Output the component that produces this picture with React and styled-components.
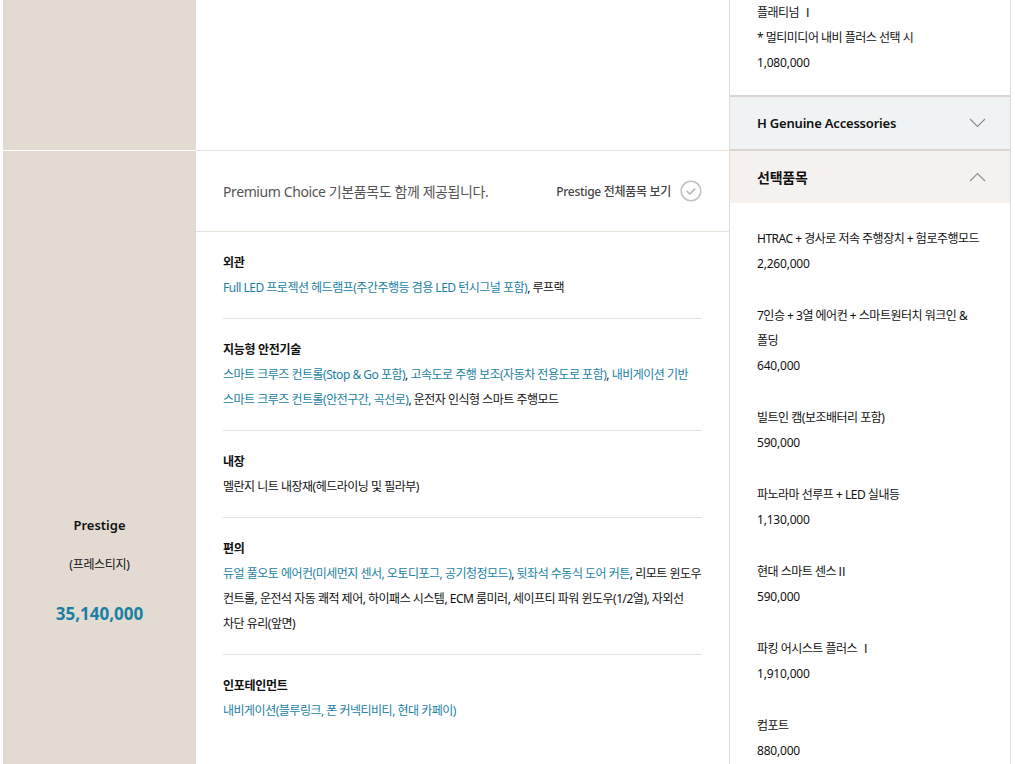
import styled, { createGlobalStyle } from 'styled-components';

const GlobalStyle = createGlobalStyle`
  html, body {
    margin: 0;
    padding: 0;
    background: #fff;
  }
  body {
    font-family: "Noto Sans", "Noto Sans CJK KR", sans-serif;
    color: #111;
    word-break: keep-all;
    overflow: hidden;
  }
`;

const Page = styled.div`
  display: flex;
  align-items: flex-start;
  padding-left: 3px;
  width: 1015px;
`;

const Main = styled.div`
  width: 726px;
  display: flex;
  flex-direction: column;
`;

const Row = styled.div`
  display: flex;
  min-height: ${p => p.$minHeight}px;
`;

const TrimCell = styled.div`
  width: 193px;
  flex-shrink: 0;
  background: #e3dbd2;
  border-top: ${p => (p.$divided ? '1px solid #fff' : 'none')};
  display: flex;
  flex-direction: column;
  align-items: center;
  justify-content: center;
  text-align: center;
`;

const TrimName = styled.div`
  font-size: 13px;
  font-weight: 600;
  line-height: 20px;
  margin-bottom: 20px;
`;

const TrimKor = styled.div`
  font-size: 12px;
  line-height: 20px;
  letter-spacing: -0.3px;
  margin-bottom: 27px;
`;

const TrimPrice = styled.div`
  font-size: 17px;
  font-weight: 700;
  line-height: 24px;
  color: #1a7fa3;
`;

const DetailCell = styled.div`
  flex: 1;
  background: #fff;
  border-top: ${p => (p.$divided ? '1px solid #e8e1da' : 'none')};
`;

const DetailHeader = styled.div`
  height: 80px;
  display: flex;
  align-items: center;
  justify-content: space-between;
  padding: 0 27px;
  border-bottom: 1px solid #e8e1da;
`;

const HeaderNote = styled.div`
  font-size: 14px;
  color: #555;
  letter-spacing: -0.4px;
`;

const ViewAll = styled.button`
  display: flex;
  align-items: center;
  gap: 9px;
  background: none;
  border: 0;
  padding: 0;
  font-family: inherit;
  font-size: 12px;
  font-weight: 500;
  color: #444;
  letter-spacing: -0.3px;
  cursor: pointer;
`;

const FeatureList = styled.div`
  padding: 0 27px;
`;

const FeatureGroup = styled.div`
  padding: 18px 0 18px;
  border-bottom: ${p => (p.$last ? 'none' : '1px solid #e5e0da')};
`;

const FeatureTitle = styled.div`
  font-size: 12px;
  font-weight: 700;
  line-height: 25px;
  letter-spacing: -0.3px;
`;

const FeatureText = styled.div`
  font-size: 12px;
  line-height: 25px;
  color: #111;
  letter-spacing: -0.5px;
`;

const Link = styled.span`
  color: #1a7fa3;
`;

const Sidebar = styled.aside`
  width: 280px;
  flex-shrink: 0;
  border-left: 1px solid #e3dcd4;
  border-right: 1px solid #e3dcd4;
`;

const OptionBlock = styled.div`
  padding: ${p => p.$padding};
  border-bottom: ${p => (p.$bordered ? '2px solid #d9d4cf' : 'none')};
`;

const AccordionHead = styled.div`
  height: 52px;
  display: flex;
  align-items: center;
  justify-content: space-between;
  padding: 0 24px 0 27px;
  background: ${p => p.$bg};
  border-bottom: ${p => (p.$bordered ? '2px solid #d9d4cf' : 'none')};
  font-size: ${p => p.$size}px;
  font-weight: 600;
  letter-spacing: -0.2px;
`;

const OptionItem = styled.div`
  margin-bottom: 27px;
  padding-right: 24px;
`;

const OptionName = styled.div`
  font-size: 12px;
  line-height: 25px;
  letter-spacing: -0.5px;
`;

const OptionPrice = styled.div`
  font-size: 12px;
  line-height: 25px;
  letter-spacing: -0.2px;
`;

function CheckCircle() {
  return (
    <svg width="22" height="22" viewBox="0 0 22 22">
      <circle cx="11" cy="11" r="9.8" fill="none" stroke="#c2c2c2" strokeWidth="1.6" />
      <polyline points="6.8,11.2 9.8,14 15.2,8.6" fill="none" stroke="#b5b5b5" strokeWidth="1.6" />
    </svg>
  );
}

function Chevron({ up }) {
  return (
    <svg width="17" height="10" viewBox="0 0 17 10">
      <polyline
        points={up ? '1,9 8.5,1.5 16,9' : '1,1 8.5,8.5 16,1'}
        fill="none"
        stroke="#8a8a8a"
        strokeWidth="1.1"
      />
    </svg>
  );
}

const features = [
  {
    title: '외관',
    text: (
      <>
        <Link>Full LED 프로젝션 헤드램프(주간주행등 겸용 LED 턴시그널 포함)</Link>, 루프랙
      </>
    ),
  },
  {
    title: '지능형 안전기술',
    text: (
      <>
        <Link>스마트 크루즈 컨트롤(Stop &amp; Go 포함)</Link>, <Link>고속도로 주행 보조(자동차 전용도로 포함)</Link>,{' '}
        <Link>내비게이션 기반 스마트 크루즈 컨트롤(안전구간, 곡선로)</Link>, 운전자 인식형 스마트 주행모드
      </>
    ),
  },
  {
    title: '내장',
    text: <>멜란지 니트 내장재(헤드라이닝 및 필라부)</>,
  },
  {
    title: '편의',
    text: (
      <>
        <Link>듀얼 풀오토 에어컨(미세먼지 센서, 오토디포그, 공기청정모드)</Link>, <Link>뒷좌석 수동식 도어 커튼</Link>, 리모트 윈도우
        컨트롤, 운전석 자동 쾌적 제어, 하이패스 시스템, ECM 룸미러, 세이프티 파워 윈도우(1/2열), 자외선 차단 유리(앞면)
      </>
    ),
  },
  {
    title: '인포테인먼트',
    text: <Link>내비게이션(블루링크, 폰 커넥티비티, 현대 카페이)</Link>,
  },
];

const options = [
  { name: 'HTRAC + 경사로 저속 주행장치 + 험로주행모드', price: '2,260,000' },
  { name: '7인승 + 3열 에어컨 + 스마트원터치 워크인 & 폴딩', price: '640,000' },
  { name: '빌트인 캠(보조배터리 포함)', price: '590,000' },
  { name: '파노라마 선루프 + LED 실내등', price: '1,130,000' },
  { name: '현대 스마트 센스Ⅱ', price: '590,000' },
  { name: '파킹 어시스트 플러스 Ⅰ', price: '1,910,000' },
  { name: '컴포트', price: '880,000' },
];

export default function App() {
  return (
    <>
      <GlobalStyle />
      <Page>
        <Main>
          <Row $minHeight={150}>
            <TrimCell />
            <DetailCell />
          </Row>
          <Row $minHeight={839}>
            <TrimCell $divided>
              <TrimName>Prestige</TrimName>
              <TrimKor>(프레스티지)</TrimKor>
              <TrimPrice>35,140,000</TrimPrice>
            </TrimCell>
            <DetailCell $divided>
              <DetailHeader>
                <HeaderNote>Premium Choice 기본품목도 함께 제공됩니다.</HeaderNote>
                <ViewAll>
                  Prestige 전체품목 보기
                  <CheckCircle />
                </ViewAll>
              </DetailHeader>
              <FeatureList>
                {features.map((f, i) => (
                  <FeatureGroup key={f.title} $last={i === features.length - 1}>
                    <FeatureTitle>{f.title}</FeatureTitle>
                    <FeatureText>{f.text}</FeatureText>
                  </FeatureGroup>
                ))}
              </FeatureList>
            </DetailCell>
          </Row>
        </Main>

        <Sidebar>
          <OptionBlock $padding="0 24px 20px 27px" $bordered>
            <OptionName>플래티넘 Ⅰ</OptionName>
            <OptionName>* 멀티미디어 내비 플러스 선택 시</OptionName>
            <OptionPrice>1,080,000</OptionPrice>
          </OptionBlock>
          <AccordionHead $bg="#eff3f4" $size={13} $bordered>
            H Genuine Accessories
            <Chevron />
          </AccordionHead>
          <AccordionHead $bg="#f5f1ee" $size={14}>
            선택품목
            <Chevron up />
          </AccordionHead>
          <OptionBlock $padding="23px 0 0 27px">
            {options.map(o => (
              <OptionItem key={o.name}>
                <OptionName>{o.name}</OptionName>
                <OptionPrice>{o.price}</OptionPrice>
              </OptionItem>
            ))}
          </OptionBlock>
        </Sidebar>
      </Page>
    </>
  );
}
